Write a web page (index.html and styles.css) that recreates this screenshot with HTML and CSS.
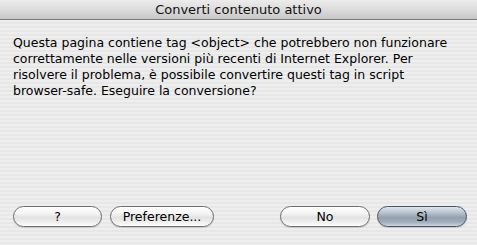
FILE: index.html
```html
<!DOCTYPE html>
<html lang="it">
<head>
<meta charset="utf-8">
<title>Converti contenuto attivo</title>
<link rel="stylesheet" href="styles.css">
</head>
<body>
<div class="window">
  <div class="titlebar">Converti contenuto attivo</div>
  <div class="content">
    <p class="message">Questa pagina contiene tag &lt;object&gt; che potrebbero non funzionare correttamente nelle versioni più recenti di Internet Explorer. Per risolvere il problema, è possibile convertire questi tag in script <span class="nowrap">browser-safe.</span> Eseguire la conversione?</p>
    <div class="buttons">
      <button class="btn btn-help">?</button>
      <button class="btn btn-prefs">Preferenze...</button>
      <span class="spacer"></span>
      <button class="btn btn-no">No</button>
      <button class="btn btn-yes">Sì</button>
    </div>
  </div>
</div>
</body>
</html>
```
FILE: styles.css
```css
html, body {
  margin: 0;
  padding: 0;
}
body {
  width: 477px;
  height: 245px;
  overflow: hidden;
  font-family: "DejaVu Sans", "Liberation Sans", sans-serif;
}
.window {
  width: 477px;
  height: 245px;
  display: flex;
  flex-direction: column;
  background: repeating-linear-gradient(to bottom, #eeeeee 0 2px, #e7e7e7 2px 4px);
}
.titlebar {
  height: 19px;
  line-height: 19px;
  text-align: center;
  font-size: 13px;
  color: #111;
  background: linear-gradient(to bottom, #ececec 0%, #dcdcdc 50%, #c7c7c7 100%);
  border-bottom: 1px solid #7b7b7b;
  flex: none;
}
.content {
  flex: 1;
  display: flex;
  flex-direction: column;
  padding: 15px 10px 18px 13px;
}
.message {
  margin: 0;
  width: 450px;
  font-size: 12.5px;
  line-height: 16px;
  color: #000;
}
.nowrap {
  white-space: nowrap;
}
.buttons {
  margin-top: auto;
  display: flex;
  align-items: center;
}
.spacer {
  flex: 1;
}
.btn {
  height: 21px;
  padding: 0;
  margin: 0;
  border: 1px solid #6f6f6f;
  border-radius: 11px;
  font-family: "DejaVu Sans", "Liberation Sans", sans-serif;
  font-size: 12.5px;
  color: #000;
  background: linear-gradient(to bottom, #ffffff 0%, #f4f4f4 35%, #e2e2e2 55%, #f2f2f2 85%, #ffffff 100%);
  box-shadow: 0 1px 1px rgba(0,0,0,0.15);
}
.btn-help { width: 89px; }
.btn-prefs { width: 104px; margin-left: 8px; }
.btn-no { width: 90px; }
.btn-yes {
  width: 90px;
  margin-left: 7px;
  border-color: #4a5461;
  background: linear-gradient(to bottom, #dfe5eb 0%, #b9c3cd 30%, #93a1af 55%, #a1afbd 80%, #cdd6df 100%);
}
```
